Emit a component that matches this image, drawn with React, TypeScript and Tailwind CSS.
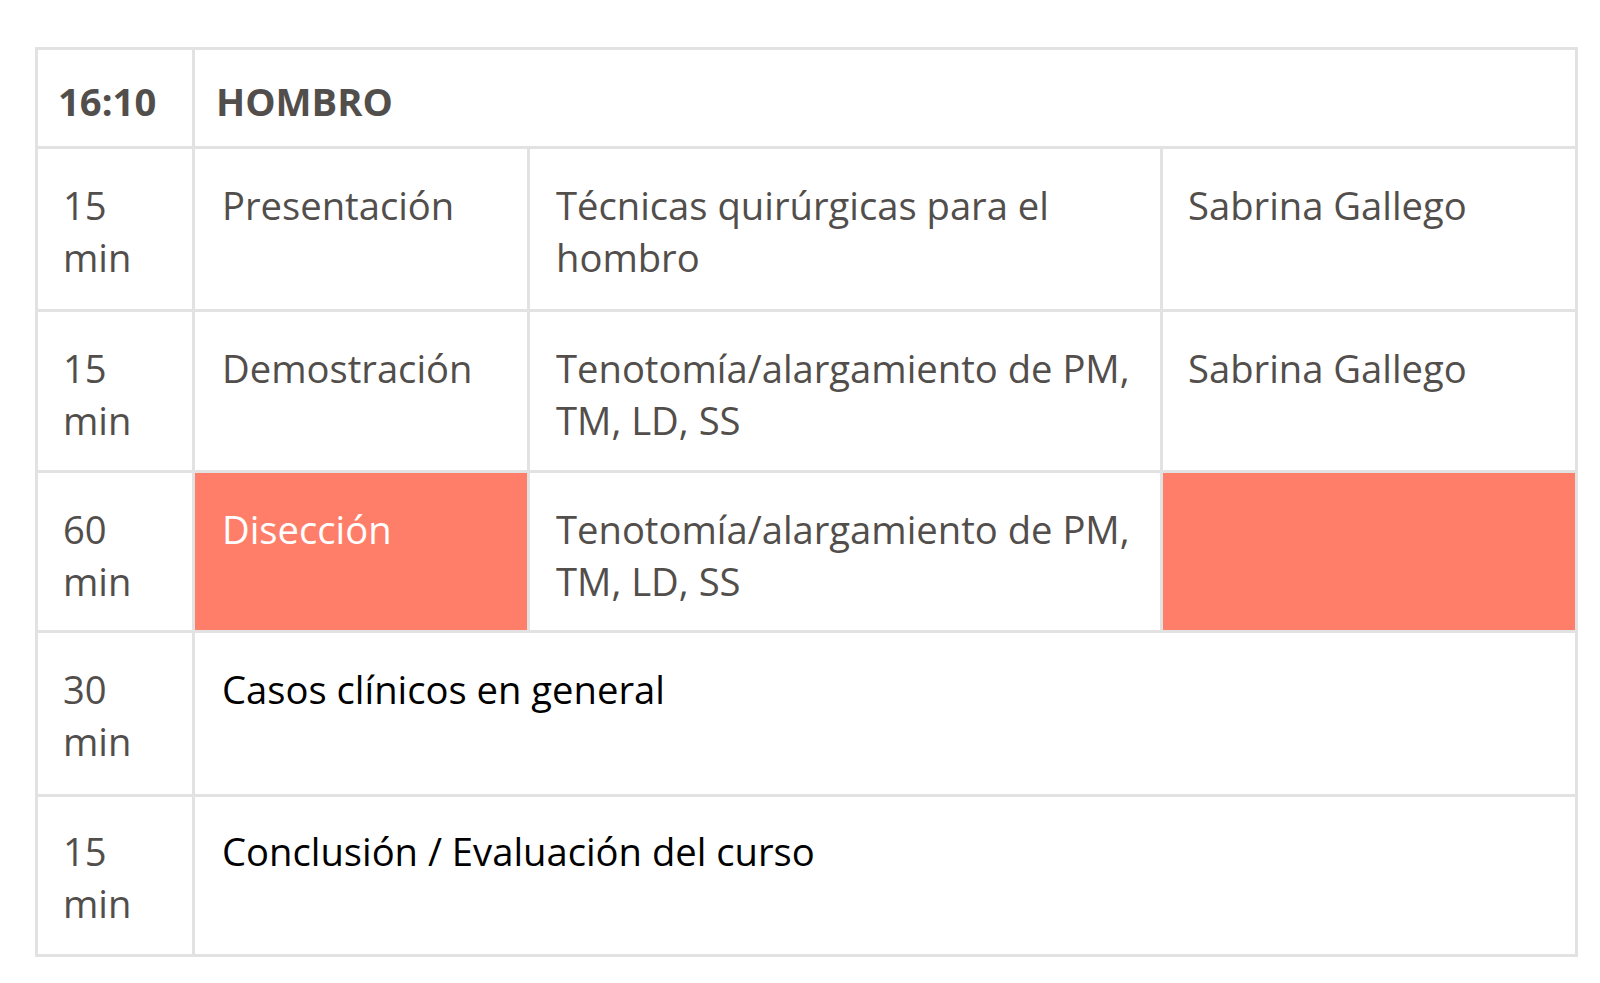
import React from "react";

const border = "border-r-[3px] border-b-[3px] border-[#e2e2e2]";
const txt = "pt-[30px] pr-[20px] text-[#524e4b]";

export default function App() {
  return (
    <div
      className="min-h-screen bg-white pl-[35px] pt-[47px]"
      style={{ fontFamily: "'Open Sans', 'Noto Sans', sans-serif" }}
    >
      <div className="grid w-[1543px] grid-cols-[157px_335px_633px_415px] grid-rows-[99px_163px_161px_160px_164px_160px] border-l-[3px] border-t-[3px] border-[#e2e2e2] text-[38.2px] leading-[52px]">
        <div className={`${border} pl-[20px] pt-[25px] font-bold text-[#524e4b]`}>16:10</div>
        <div className={`${border} col-span-3 pl-[21px] pt-[25px] font-bold text-[#524e4b]`}>HOMBRO</div>

        <div className={`${border} ${txt} pl-[25px]`}>15 min</div>
        <div className={`${border} ${txt} pl-[27px]`}>Presentación</div>
        <div className={`${border} ${txt} pl-[26px]`}>Técnicas quirúrgicas para el hombro</div>
        <div className={`${border} ${txt} pl-[25px]`}>Sabrina Gallego</div>

        <div className={`${border} ${txt} pl-[25px]`}>15 min</div>
        <div className={`${border} ${txt} pl-[27px]`}>Demostración</div>
        <div className={`${border} ${txt} pl-[26px]`}>Tenotomía/alargamiento de PM, TM, LD, SS</div>
        <div className={`${border} ${txt} pl-[25px]`}>Sabrina Gallego</div>

        <div className={`${border} ${txt} pl-[25px]`}>60 min</div>
        <div className={`${border} bg-[#ff7e69] pl-[27px] pr-[20px] pt-[30px] text-white`}>Disección</div>
        <div className={`${border} ${txt} pl-[26px]`}>Tenotomía/alargamiento de PM, TM, LD, SS</div>
        <div className={`${border} bg-[#ff7e69]`}></div>

        <div className={`${border} ${txt} pl-[25px]`}>30 min</div>
        <div className={`${border} col-span-3 pl-[27px] pt-[30px] text-black`}>Casos clínicos en general</div>

        <div className={`${border} pl-[25px] pr-[20px] pt-[28px] text-[#524e4b]`}>15 min</div>
        <div className={`${border} col-span-3 pl-[27px] pt-[28px] text-black`}>Conclusión / Evaluación del curso</div>
      </div>
    </div>
  );
}
